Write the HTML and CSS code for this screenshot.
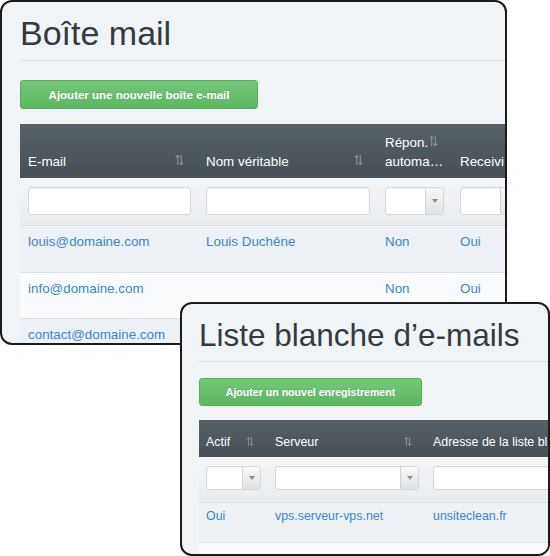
FILE: index.html
```html
<!DOCTYPE html>
<html lang="fr">
<head>
<meta charset="utf-8">
<title>Boîte mail</title>
<link rel="stylesheet" href="styles.css">
</head>
<body>
<div class="desk">
  <section class="win win-mail">
    <h1 class="title">Boîte mail</h1>
    <div class="rule"></div>
    <button class="btn">Ajouter une nouvelle boîte e-mail</button>
    <div class="grid">
      <div class="row head">
        <div class="th"><span>E-mail</span><svg class="sort" viewBox="0 0 10 12"><path d="M3 11.5V1M1 3.2L3 1l2 2.2M7 0.5V11M5 8.8L7 11l2-2.2"/></svg></div>
        <div class="th"><span>Nom véritable</span><svg class="sort" viewBox="0 0 10 12"><path d="M3 11.5V1M1 3.2L3 1l2 2.2M7 0.5V11M5 8.8L7 11l2-2.2"/></svg></div>
        <div class="th multi">Répon.<svg class="sort inl" viewBox="0 0 10 12"><path d="M3 11.5V1M1 3.2L3 1l2 2.2M7 0.5V11M5 8.8L7 11l2-2.2"/></svg><br>automa…</div>
        <div class="th"><span>Receivi</span></div>
      </div>
      <div class="row filters">
        <div class="fc"><div class="inp"></div></div>
        <div class="fc"><div class="inp"></div></div>
        <div class="fc"><div class="sel"><span class="arr"><i class="tri"></i></span></div></div>
        <div class="fc"><div class="sel"><span class="arr"><i class="tri"></i></span></div></div>
      </div>
      <div class="row data odd">
        <div class="td">louis@domaine.com</div>
        <div class="td">Louis Duchêne</div>
        <div class="td">Non</div>
        <div class="td">Oui</div>
      </div>
      <div class="row data">
        <div class="td">info@domaine.com</div>
        <div class="td"></div>
        <div class="td">Non</div>
        <div class="td">Oui</div>
      </div>
      <div class="row data odd">
        <div class="td">contact@domaine.com</div>
        <div class="td"></div>
        <div class="td"></div>
        <div class="td"></div>
      </div>
    </div>
  </section>

  <section class="win win-white">
    <h1 class="title">Liste blanche d’e-mails</h1>
    <div class="rule"></div>
    <button class="btn">Ajouter un nouvel enregistrement</button>
    <div class="grid">
      <div class="row head">
        <div class="th"><span>Actif</span><svg class="sort" viewBox="0 0 10 12"><path d="M3 11.5V1M1 3.2L3 1l2 2.2M7 0.5V11M5 8.8L7 11l2-2.2"/></svg></div>
        <div class="th"><span>Serveur</span><svg class="sort" viewBox="0 0 10 12"><path d="M3 11.5V1M1 3.2L3 1l2 2.2M7 0.5V11M5 8.8L7 11l2-2.2"/></svg></div>
        <div class="th"><span>Adresse de la liste bl</span></div>
      </div>
      <div class="row filters">
        <div class="fc"><div class="sel"><span class="arr"><i class="tri"></i></span></div></div>
        <div class="fc"><div class="sel"><span class="arr"><i class="tri"></i></span></div></div>
        <div class="fc"><div class="inp"></div></div>
      </div>
      <div class="row data odd">
        <div class="td">Oui</div>
        <div class="td">vps.serveur-vps.net</div>
        <div class="td">unsiteclean.fr</div>
      </div>
      <div class="row data">
        <div class="td"></div>
        <div class="td"></div>
        <div class="td"></div>
      </div>
    </div>
  </section>
</div>
</body>
</html>
```
FILE: styles.css
```css
html, body {
  margin: 0;
  padding: 0;
  background: #ffffff;
}
body {
  font-family: "Liberation Sans", Arial, Helvetica, sans-serif;
}
.desk {
  position: relative;
  width: 550px;
  height: 556px;
  overflow: hidden;
}
.win {
  position: absolute;
  box-sizing: border-box;
  border: 2px solid #1b1b1b;
  border-radius: 12px;
  background: #f1f4f7;
  overflow: hidden;
}
.win-mail {
  left: 0;
  top: 0;
  width: 507px;
  height: 345px;
  padding-left: 18px;
}
.win-white {
  left: 180px;
  top: 302px;
  width: 370px;
  height: 254px;
  padding-left: 17px;
}
.title {
  margin: 0;
  font-weight: normal;
  color: #333a40;
  white-space: nowrap;
}
.win-mail .title {
  font-size: 34px;
  line-height: 40px;
  margin: 10.5px 0 7.5px;
}
.win-white .title {
  font-size: 31.5px;
  line-height: 37px;
  margin: 12.6px 0 7.4px;
}
.rule {
  height: 0;
  border-top: 1px solid #dadee2;
}
.btn {
  display: block;
  box-sizing: border-box;
  padding: 0;
  border: 1px solid #5aae5e;
  border-radius: 3px;
  background: linear-gradient(#74c878, #5db661);
  color: #ffffff;
  font-family: "Liberation Sans", Arial, sans-serif;
  font-weight: bold;
  text-shadow: 0 -1px 0 rgba(0, 0, 0, 0.12);
  white-space: nowrap;
  text-align: center;
}
.win-mail .btn {
  margin-top: 19px;
  width: 238px;
  height: 29px;
  font-size: 11.5px;
}
.win-white .btn {
  margin-top: 16px;
  width: 223px;
  height: 28px;
  font-size: 10.6px;
}
.win-mail .grid {
  margin-top: 15px;
  font-size: 13.4px;
}
.win-white .grid {
  margin-top: 14px;
  font-size: 12.4px;
}
.row {
  display: grid;
}
.win-mail .row {
  grid-template-columns: 178px 179px 75px 1fr;
}
.win-white .row {
  grid-template-columns: 69px 158px 1fr;
}
.head {
  background: linear-gradient(#566067, #475057);
  color: #ffffff;
}
.win-mail .head { height: 54px; }
.win-white .head { height: 37px; }
.th {
  display: flex;
  align-items: flex-end;
  justify-content: space-between;
  white-space: nowrap;
  overflow: hidden;
}
.win-mail .th {
  line-height: 19px;
  padding: 0 14px 7px 8px;
}
.win-white .th {
  line-height: 17px;
  padding: 0 14px 6px 7px;
}
.win-mail .th:last-child,
.win-white .th:last-child {
  padding-right: 0;
}
.th.multi {
  display: block;
  align-self: end;
  padding-right: 0;
}
.sort {
  flex: none;
  width: 9px;
  height: 12px;
  margin-bottom: 5px;
  fill: none;
  stroke: #8d959c;
  stroke-width: 1.2;
}
.win-white .sort {
  width: 8px;
  height: 11px;
  margin-bottom: 4px;
}
.sort.inl {
  margin: 0 0 0 1px;
  vertical-align: baseline;
}
.filters {
  background: linear-gradient(#f3f5f7, #e9ecef);
}
.win-mail .filters { height: 47px; }
.win-white .filters { height: 45px; }
.fc {
  box-sizing: border-box;
  padding-top: 9px;
}
.win-mail .fc { padding-left: 8px; padding-right: 7px; }
.win-white .fc { padding-left: 7px; padding-right: 7px; }
.fc:last-child { padding-right: 0; }
.inp, .sel {
  box-sizing: border-box;
  background: #ffffff;
  border: 1px solid #d2d7db;
  border-radius: 3px;
  box-shadow: inset 0 1px 2px rgba(0, 0, 0, 0.06);
}
.win-mail .inp, .win-mail .sel { height: 28px; }
.win-white .inp, .win-white .sel { height: 24px; }
.win-mail .fc:nth-child(3) .sel { width: 59px; }
.win-mail .fc:nth-child(4) .sel { width: 59px; }
.win-white .fc:nth-child(1) .sel { width: 55px; }
.win-white .fc:nth-child(3) .inp { width: 140px; }
.sel {
  display: flex;
  justify-content: flex-end;
  overflow: hidden;
}
.arr {
  width: 17px;
  display: flex;
  align-items: center;
  justify-content: center;
  background: linear-gradient(#f7f7f7, #e0e2e4);
  border-left: 1px solid #cfd3d6;
}
.tri {
  width: 0;
  height: 0;
  border-left: 3px solid transparent;
  border-right: 3px solid transparent;
  border-top: 4px solid #8a8f93;
}
.data {
  box-sizing: border-box;
  border-top: 1px solid #dde2e6;
  background: #fafbfc;
  color: #3c86c6;
}
.data.odd {
  background: #edf1f5;
}
.win-mail .data { height: 46.5px; }
.win-white .data { height: 40px; }
.td {
  white-space: nowrap;
  overflow: hidden;
}
.win-mail .td {
  line-height: 18px;
  padding: 7px 8px 0;
}
.win-white .td {
  line-height: 17px;
  padding: 5px 7px 0;
}
```
